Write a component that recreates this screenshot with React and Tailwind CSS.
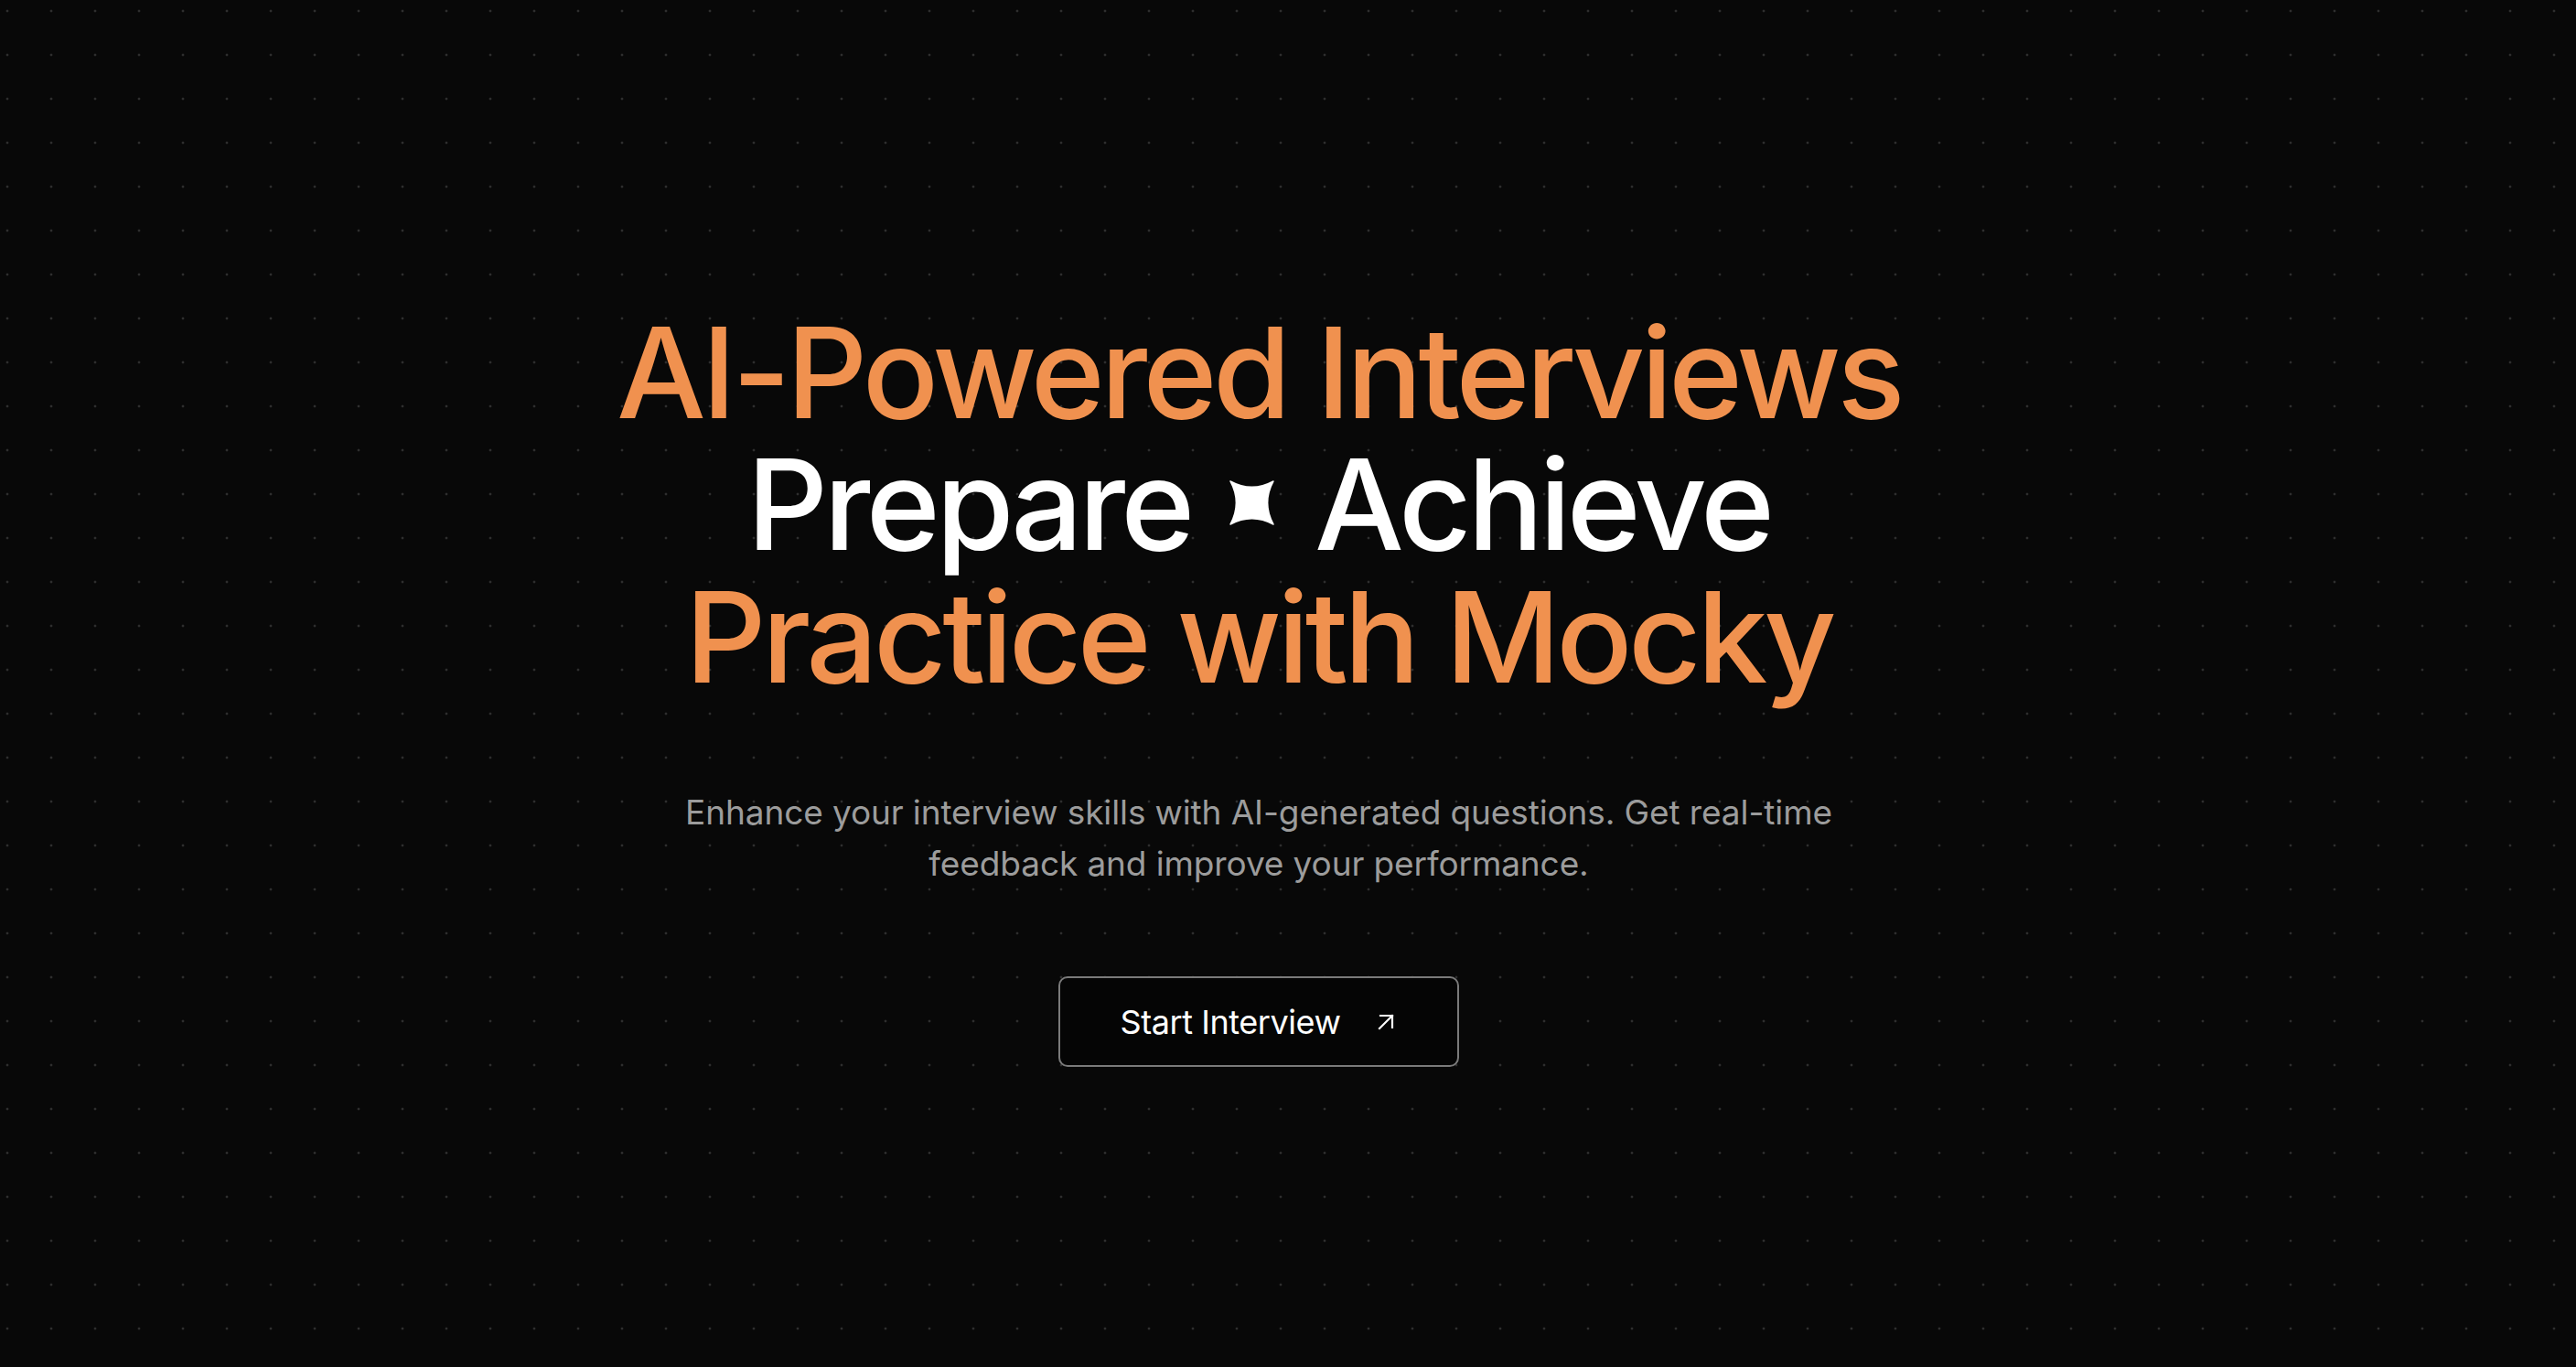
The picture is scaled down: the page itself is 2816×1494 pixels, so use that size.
export default function App() {
  return (
    <div className="w-full h-screen bg-[#080808] bg-[radial-gradient(circle,#2e2e2e_1.2px,transparent_1.7px)] bg-[size:48px_48px] bg-[position:-16px_-12px] font-['Inter',sans-serif] overflow-hidden">
      <div className="h-full flex flex-col items-center justify-center pr-[64px] pt-[7px]">
        <h1 className="flex flex-col items-center text-[138px] leading-[144.5px] font-medium tracking-[-0.033em]">
          <span className="text-[#F0914F]">AI-Powered Interviews</span>
          <span className="flex items-center text-white">
            <span>Prepare</span>
            <svg viewBox="0 0 50 50" className="w-[49px] h-[49px] ml-[42px] mr-[44px] -translate-y-[2px]" fill="#ffffff">
              <path d="M1 1 Q25 14 49 1 Q36 25 49 49 Q25 36 1 49 Q14 25 1 1 Z" stroke="#ffffff" strokeWidth="1.5" strokeLinejoin="round" />
            </svg>
            <span>Achieve</span>
          </span>
          <span className="text-[#F0914F]">Practice with Mocky</span>
        </h1>
        <p className="mt-[92px] max-w-[1320px] text-center text-[37px] leading-[56px] tracking-[-0.003em] text-[#9c9c9c]">
          Enhance your interview skills with AI-generated questions. Get real-time feedback and improve your performance.
        </p>
        <button className="mt-[95px] h-[99px] flex items-center pl-[65px] pr-[69px] rounded-[10px] border-2 border-[#7a7a7a] text-white text-[36px] tracking-[-0.012em] bg-[#050505]">
          <span>Start Interview</span>
          <svg viewBox="0 0 18 18" className="ml-[40px] w-[18px] h-[18px]" fill="none" stroke="#ffffff" strokeWidth="2.2" strokeLinecap="square">
            <path d="M2 16 L16 2" />
            <path d="M3 2 H16 V15" />
          </svg>
        </button>
      </div>
    </div>
  );
}
